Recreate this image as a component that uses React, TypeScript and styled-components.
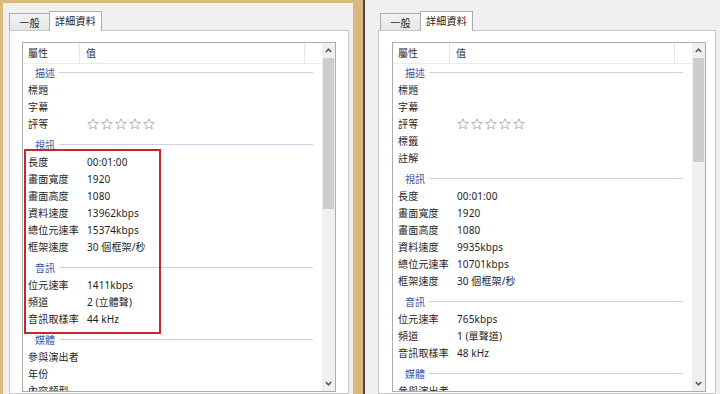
import React from 'react';
import styled, { createGlobalStyle } from 'styled-components';

const GlobalStyle = createGlobalStyle`
  html, body {
    margin: 0;
    padding: 0;
    background: #f0f0f0;
  }
  body {
    font-family: "Noto Sans", "Noto Sans CJK TC", sans-serif;
    font-size: 10px;
    color: #1e1e1e;
  }
`;

type Item = { label: string; value?: string; stars?: boolean };
type Group = { title: string; items: Item[] };

const leftGroups: Group[] = [
  {
    title: '描述',
    items: [{ label: '標題' }, { label: '字幕' }, { label: '評等', stars: true }],
  },
  {
    title: '視訊',
    items: [
      { label: '長度', value: '00:01:00' },
      { label: '畫面寬度', value: '1920' },
      { label: '畫面高度', value: '1080' },
      { label: '資料速度', value: '13962kbps' },
      { label: '總位元速率', value: '15374kbps' },
      { label: '框架速度', value: '30 個框架/秒' },
    ],
  },
  {
    title: '音訊',
    items: [
      { label: '位元速率', value: '1411kbps' },
      { label: '頻道', value: '2 (立體聲)' },
      { label: '音訊取樣率', value: '44 kHz' },
    ],
  },
  {
    title: '媒體',
    items: [{ label: '參與演出者' }, { label: '年份' }, { label: '內容類型' }],
  },
];

const rightGroups: Group[] = [
  {
    title: '描述',
    items: [
      { label: '標題' },
      { label: '字幕' },
      { label: '評等', stars: true },
      { label: '標籤' },
      { label: '註解' },
    ],
  },
  {
    title: '視訊',
    items: [
      { label: '長度', value: '00:01:00' },
      { label: '畫面寬度', value: '1920' },
      { label: '畫面高度', value: '1080' },
      { label: '資料速度', value: '9935kbps' },
      { label: '總位元速率', value: '10701kbps' },
      { label: '框架速度', value: '30 個框架/秒' },
    ],
  },
  {
    title: '音訊',
    items: [
      { label: '位元速率', value: '765kbps' },
      { label: '頻道', value: '1 (單聲道)' },
      { label: '音訊取樣率', value: '48 kHz' },
    ],
  },
  {
    title: '媒體',
    items: [{ label: '參與演出者' }],
  },
];

const Page = styled.div`
  display: flex;
  width: 720px;
  height: 394px;
  overflow: hidden;
  background: #f0f0f0;
`;

const Window = styled.div<{ $framed?: boolean }>`
  box-sizing: border-box;
  display: flex;
  flex-direction: column;
  background: #f0f0f0;
  ${(p) =>
    p.$framed
      ? `
    width: 363px;
    flex: none;
    border-left: 3px solid #ddb97f;
    border-top: 3px solid #ddb97f;
    border-right: 10px solid #ddb97f;
    padding: 8px 4px 0 6px;
  `
      : `
    flex: 1;
    padding: 11px 4px 0 13px;
  `}
`;

const Seam = styled.div`
  width: 2px;
  flex: none;
  background: #4b4740;
`;

const TabBar = styled.div<{ $inset: number }>`
  display: flex;
  align-items: flex-end;
  height: 19px;
  padding-left: ${(p) => p.$inset}px;
`;

const Tab = styled.div<{ $active?: boolean }>`
  box-sizing: border-box;
  display: flex;
  align-items: center;
  justify-content: center;
  border: 1px solid #acacac;
  border-bottom: none;
  color: #1e1e1e;
  font-size: 10px;
  letter-spacing: 0.2px;
  ${(p) =>
    p.$active
      ? `
    width: 53px;
    height: 20px;
    margin-bottom: -1px;
    background: #fff;
    position: relative;
    z-index: 1;
    padding-bottom: 2px;
  `
      : `
    width: 40px;
    height: 17px;
    background: linear-gradient(#f3f3f3, #e6e6e6);
    border-right: none;
  `}
`;

const TabPanel = styled.div<{ $padLeft: number }>`
  flex: 1;
  box-sizing: border-box;
  background: #fff;
  border: 1px solid #c9c9c9;
  padding: 11px 0 0 ${(p) => p.$padLeft}px;
`;

const ListBox = styled.div`
  position: relative;
  box-sizing: border-box;
  width: 314px;
  height: 350px;
  border: 1px solid #adadad;
  display: flex;
  background: #fff;
`;

const Content = styled.div`
  flex: 1;
  overflow: hidden;
`;

const HeaderRow = styled.div`
  display: flex;
  height: 20px;
  border-bottom: 1px solid #ececec;
  color: #333;
`;

const HeaderCell = styled.div<{ $width: number; $pad: number }>`
  box-sizing: border-box;
  width: ${(p) => p.$width}px;
  padding-left: ${(p) => p.$pad}px;
  line-height: 20px;
  border-right: 1px solid #e6e6e6;
`;

const GroupHeader = styled.div<{ $first?: boolean }>`
  display: flex;
  align-items: center;
  height: 17px;
  margin-top: ${(p) => (p.$first ? 0 : 4)}px;
  padding: 0 9px 0 12px;
  color: #3552a0;
`;

const GroupLine = styled.div`
  flex: 1;
  height: 1px;
  margin-left: 4px;
  background: #c9d3e4;
`;

const Row = styled.div`
  display: flex;
  align-items: center;
  height: 17px;
  white-space: nowrap;
`;

const Label = styled.span`
  box-sizing: border-box;
  width: 64px;
  padding-left: 5px;
  letter-spacing: 0.2px;
  flex: none;
`;

const Value = styled.span`
  letter-spacing: 0.1px;
`;

const Stars = styled.span`
  display: flex;
  gap: 2px;
`;

const ScrollBar = styled.div`
  width: 13px;
  flex: none;
  display: flex;
  flex-direction: column;
  background: #f0f0f0;
`;

const ScrollButton = styled.div`
  height: 15px;
  display: flex;
  align-items: center;
  justify-content: center;
`;

const Thumb = styled.div<{ $size: number }>`
  height: ${(p) => p.$size}px;
  margin: 0 1px;
  background: #cdcdcd;
`;

const Track = styled.div`
  flex: 1;
`;

const Highlight = styled.div`
  position: absolute;
  left: 1px;
  top: 106px;
  width: 137px;
  height: 185px;
  box-sizing: border-box;
  border: 2px solid #c8262d;
  pointer-events: none;
`;

const Star = () => (
  <svg width="12" height="12" viewBox="0 0 12 12">
    <polygon
      points="6,0.8 7.5,4.3 11.3,4.6 8.4,7.1 9.3,10.9 6,8.9 2.7,10.9 3.6,7.1 0.7,4.6 4.5,4.3"
      fill="none"
      stroke="#a9a9a9"
      strokeWidth="0.9"
      strokeLinejoin="round"
    />
  </svg>
);

const Chevron = ({ up }: { up?: boolean }) => (
  <svg width="7" height="5" viewBox="0 0 7 5">
    <polyline
      points={up ? '0.8,4 3.5,1.2 6.2,4' : '0.8,1 3.5,3.8 6.2,1'}
      fill="none"
      stroke="#555"
      strokeWidth="1.5"
    />
  </svg>
);

type DialogProps = {
  groups: Group[];
  thumb: number;
  framed?: boolean;
  highlight?: boolean;
};

const PropertiesDialog: React.FC<DialogProps> = ({ groups, thumb, framed, highlight }) => (
  <Window $framed={framed}>
    <TabBar $inset={framed ? 0 : 2}>
      <Tab>一般</Tab>
      <Tab $active>詳細資料</Tab>
    </TabBar>
    <TabPanel $padLeft={framed ? 12 : 13}>
      <ListBox>
        <Content>
          <HeaderRow>
            <HeaderCell $width={57} $pad={5}>屬性</HeaderCell>
            <HeaderCell $width={225} $pad={6}>值</HeaderCell>
          </HeaderRow>
          {groups.map((g, gi) => (
            <React.Fragment key={g.title}>
              <GroupHeader $first={gi === 0}>
                {g.title}
                <GroupLine />
              </GroupHeader>
              {g.items.map((it) => (
                <Row key={it.label}>
                  <Label>{it.label}</Label>
                  {it.stars ? (
                    <Stars>
                      {[0, 1, 2, 3, 4].map((i) => (
                        <Star key={i} />
                      ))}
                    </Stars>
                  ) : (
                    <Value>{it.value}</Value>
                  )}
                </Row>
              ))}
            </React.Fragment>
          ))}
        </Content>
        <ScrollBar>
          <ScrollButton>
            <Chevron up />
          </ScrollButton>
          <Thumb $size={thumb} />
          <Track />
          <ScrollButton>
            <Chevron />
          </ScrollButton>
        </ScrollBar>
        {highlight && <Highlight />}
      </ListBox>
    </TabPanel>
  </Window>
);

const App: React.FC = () => (
  <>
    <GlobalStyle />
    <Page>
      <PropertiesDialog groups={leftGroups} thumb={151} framed highlight />
      <Seam />
      <PropertiesDialog groups={rightGroups} thumb={104} />
    </Page>
  </>
);

export default App;
